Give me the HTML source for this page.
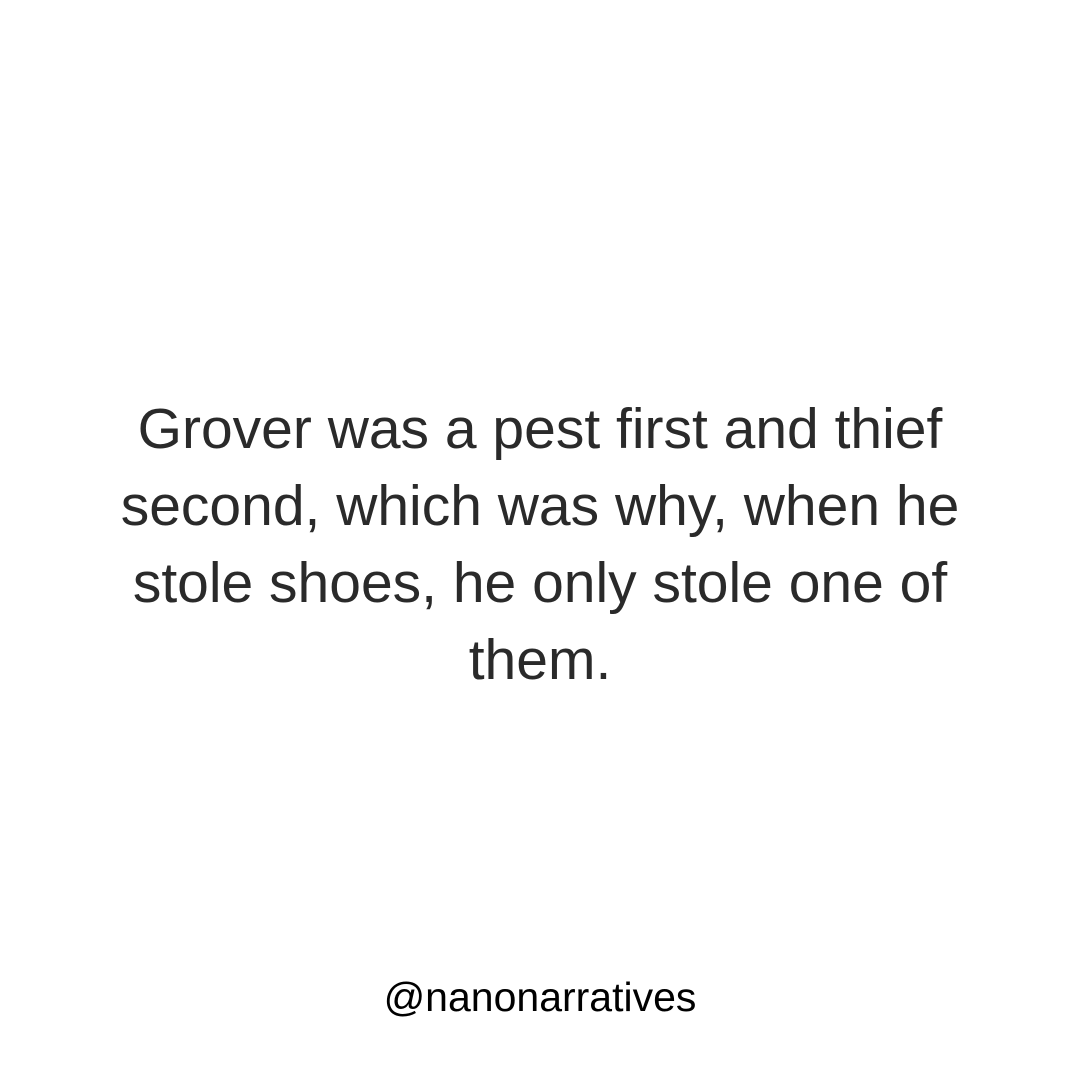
<!DOCTYPE html>
<html><head><meta charset="utf-8"><style>
html,body{margin:0;padding:0;background:#fff;}
body{width:1080px;height:1080px;position:relative;overflow:hidden;font-family:"Liberation Sans",sans-serif;color:#111;}
.q{position:absolute;left:0;width:1080px;top:391px;text-align:center;font-size:57px;line-height:77px;font-weight:normal;color:#2a2a2a;}
.h{position:absolute;left:0;width:1080px;top:972px;text-align:center;font-size:41px;line-height:50px;color:#000;}
</style></head><body>
<div class="q">Grover was a pest first and thief<br>second, which was why, when he<br>stole shoes, he only stole one of<br>them.</div>
<div class="h">@nanonarratives</div>
</body></html>
